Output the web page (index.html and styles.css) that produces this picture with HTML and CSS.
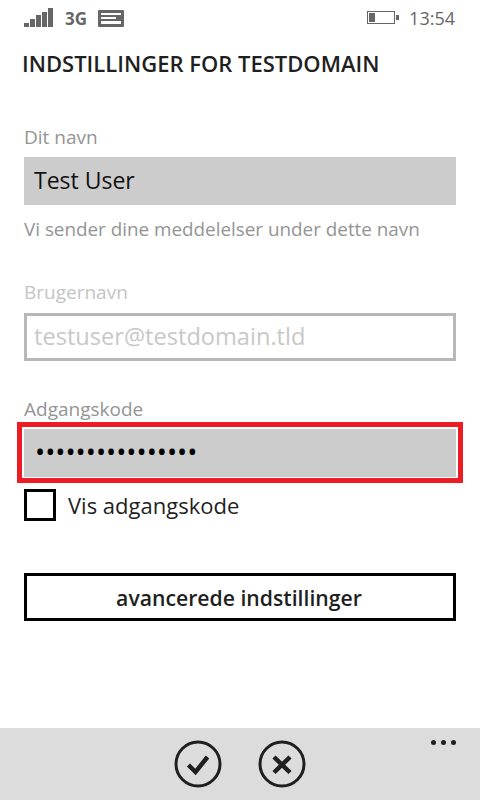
FILE: index.html
```html
<!DOCTYPE html>
<html lang="da">
<head>
<meta charset="utf-8">
<title>Indstillinger</title>
<link rel="stylesheet" href="styles.css">
</head>
<body>
<div class="phone">
  <header class="status">
    <svg class="signal" width="30" height="20" viewBox="0 0 30 20"><path d="M0 15h5v4H0zM6 11h5v8H6zM12 7h5v12h-5zM18 4h5v15h-5zM24 0h5v19h-5z"/></svg>
    <span class="net">3G</span>
    <svg class="msg" width="26" height="17" viewBox="0 0 26 17"><path fill-rule="evenodd" d="M1 0h24a1 1 0 0 1 1 1v15a1 1 0 0 1-1 1H1a1 1 0 0 1-1-1V1a1 1 0 0 1 1-1zM3 3v2h20V3zM3 7v2h15V7zM3 11v3h20v-3z"/></svg>
    <span class="spacer"></span>
    <svg class="battery" width="32" height="14" viewBox="0 0 32 14"><rect x=".5" y=".5" width="27" height="12" fill="none" stroke="#666"/><rect x="2" y="2" width="6" height="9" fill="#666"/><rect x="29" y="4" width="3" height="5" fill="#666"/></svg>
    <span class="time">13:54</span>
  </header>
  <main class="content">
    <h1 class="title">INDSTILLINGER FOR TESTDOMAIN</h1>
    <label class="label label-name">Dit navn</label>
    <div class="field filled">Test User</div>
    <p class="hint">Vi sender dine meddelelser under dette navn</p>
    <label class="label label-user dim">Brugernavn</label>
    <div class="field disabled">testuser@testdomain.tld</div>
    <label class="label label-pass">Adgangskode</label>
    <div class="highlight"><div class="field filled dots">••••••••••••••••</div></div>
    <div class="check-row"><span class="checkbox"></span><span class="check-label">Vis adgangskode</span></div>
    <button class="advanced" type="button">avancerede indstillinger</button>
  </main>
  <footer class="appbar">
    <svg class="round" width="48" height="48" viewBox="0 0 48 48"><circle cx="24" cy="24" r="22" fill="none" stroke="#1f1f1f" stroke-width="3"/><path d="M14.500 25l7 7 12-15" fill="none" stroke="#1f1f1f" stroke-width="4.500"/></svg>
    <svg class="round" width="48" height="48" viewBox="0 0 48 48"><circle cx="24" cy="24" r="22" fill="none" stroke="#1f1f1f" stroke-width="3"/><path d="M16 17l16 15.500M32 17L16 32.500" fill="none" stroke="#1f1f1f" stroke-width="4.500"/></svg>
    <div class="more"><i></i><i></i><i></i></div>
  </footer>
</div>
</body>
</html>
```
FILE: styles.css
```css
* { box-sizing: border-box; }
html, body { margin: 0; padding: 0; }
body { font-family: "Open Sans", "Noto Sans", sans-serif; background: #fff; }
.phone { width: 480px; height: 800px; display: flex; flex-direction: column; overflow: hidden; }

.status { height: 36px; flex: none; display: flex; align-items: center; padding: 0 25px 0 24px; color: #666; }
.signal { fill: #666; }
.net { font-size: 17px; font-weight: 700; margin-left: 11px; width: 33px; }
.msg { fill: #666; }
.spacer { flex: 1; }
.battery { margin-right: 10px; }
.time { font-size: 18px; line-height: 24px; font-weight: 400; }

.content { flex: 1; padding: 0 24px; display: flex; flex-direction: column; align-items: stretch; }
.title { margin: 12px 0 0 -2px; font-size: 22px; line-height: 30px; font-weight: 600; color: #1f1f1f; }
.label { display: block; font-size: 19px; line-height: 24px; color: #949494; }
.label-name { margin-top: 47px; }
.label-user { margin-top: 38px; }
.label-pass { margin-top: 36px; }
.dim { color: #c4c4c4; }
.field { height: 48px; background: #cccccc; font-size: 23px; line-height: 46px; padding: 0 10px; color: #111; margin-top: 8px; }
.disabled { background: #fff; border: 3px solid #b8b8b8; color: #c8c8c8; font-size: 23.600px; line-height: 40px; padding: 0 7px; margin-top: 9px; }
.hint { margin: 11px 0 0; font-size: 18.850px; line-height: 26px; color: #949494; }
.highlight { margin: 1px -7px 0; border: 5px solid #ed1c24; padding: 2px 2px 1px; height: 61px; }
.highlight .field { margin: 0; height: 48px; }
.dots { font-size: 27px; letter-spacing: 0; padding-left: 11px; line-height: 46px; color: #000; }
.check-row { display: flex; align-items: center; margin-top: 6px; height: 32px; }
.checkbox { width: 32px; height: 32px; border: 3px solid #000; }
.check-label { margin-left: 12px; font-size: 22px; color: #1f1f1f; }
.advanced { margin-top: 52px; height: 48px; width: 100%; background: #fff; border: 3px solid #000; font: 600 21.200px "Open Sans", sans-serif; color: #1f1f1f; padding: 0 2px 0 0; }

.appbar { height: 72px; flex: none; background: #dcdcdc; position: relative; display: flex; justify-content: center; gap: 36px; padding-top: 12px; }
.round { display: block; }
.more { position: absolute; right: 24px; top: 12px; display: flex; gap: 5px; }
.more i { width: 5px; height: 5px; border-radius: 50%; background: #1f1f1f; }
```
